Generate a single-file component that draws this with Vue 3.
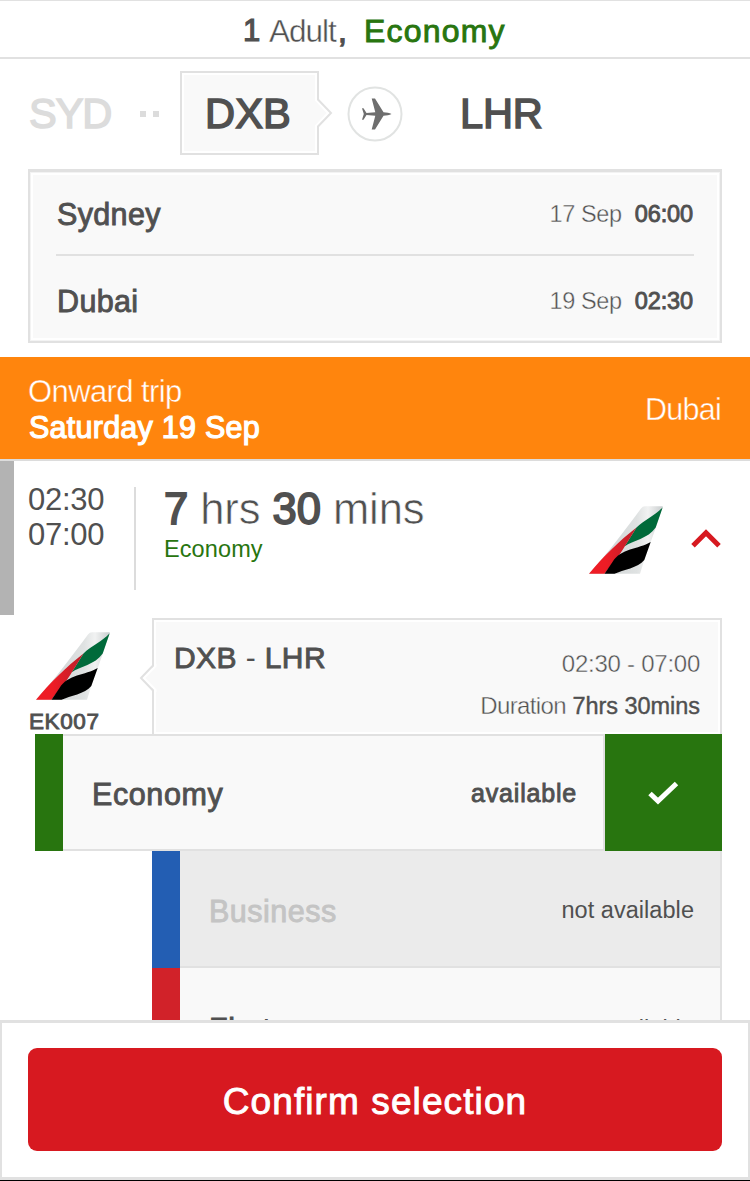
<script setup>
const stops = [
  { city: 'Sydney', date: '17 Sep', time: '06:00' },
  { city: 'Dubai', date: '19 Sep', time: '02:30' },
]
</script>

<template>
  <div class="screen">
    <svg class="defs" width="0" height="0" aria-hidden="true">
      <defs>
        <linearGradient id="fin" x1="0" y1="0" x2="1" y2="0">
          <stop offset="0.3" stop-color="#d3d7d8" />
          <stop offset="0.65" stop-color="#dfe2e2" />
          <stop offset="0.8" stop-color="#f1f2f2" />
          <stop offset="1" stop-color="#c9cdce" />
        </linearGradient>
        <linearGradient id="finRed" x1="0" y1="0" x2="1" y2="0">
          <stop offset="0.35" stop-color="#ee1c25" />
          <stop offset="1" stop-color="#b8202a" />
        </linearGradient>
        <symbol id="tail" viewBox="0 0 74 68">
          <path fill="url(#fin)" d="M0 67.7C20 46 39 20 52 2.5Q53.700 .3 56 .2H73.800L66.700 22L61.700 36L55.300 54L51 67.700Z" />
          <path fill="#006a3a" d="M73.700 1.300C66 9.500 56 13.500 47.500 21.500L35.500 40.500C44 34 59 33 66.700 21.500Z" />
          <path fill="url(#finRed)" d="M47.500 21.500C30 35 14 51 0 67.700H15.500C24 56 31 49 36 40Z" />
          <path d="M61.700 36C49 43.500 32 42 23.500 56L15.500 67.700H25.500C34 64 49 62 55.300 54Z" />
        </symbol>
      </defs>
    </svg>

    <main class="content">
      <header class="summary">
        <b class="count">1</b><span class="adult light">Adult</span><b class="comma">,</b>
        <b class="cabin">Economy</b>
      </header>

      <nav class="route">
        <b class="code from">SYD</b>
        <span class="dots"><i></i><i></i></span>
        <div class="current">
          <b class="code dxb">DXB</b>
          <svg class="arrow" width="19" height="32" viewBox="0 0 19 32">
            <path d="M0 3H4L15 16L4 29H0Z" fill="#f9f9f9" />
            <path d="M2 1V3L14 16L2 29V31" fill="none" stroke="#fff" stroke-width="2" />
            <path d="M4 0V2.500L17 16L4 29.500V32" fill="none" stroke="#e1e1e1" stroke-width="2" />
          </svg>
        </div>
        <svg class="plane" width="56" height="56" viewBox="0 0 56 56">
          <circle cx="28" cy="28" r="26.500" fill="#fff" stroke="#e1e3e2" stroke-width="2" />
          <path fill="#6e6e6e" d="M44.500 28C42.500 26.800 39.500 26.400 36.500 26.300L28 12.500H24.700L28.300 26.200L19.500 27L16.500 22.300H15L16.800 28L15 33.700H16.500L19.500 29L28.300 29.800L24.700 43.500H28L36.500 29.700C39.500 29.600 42.500 29.200 44.500 28Z" />
        </svg>
        <b class="code to">LHR</b>
      </nav>

      <section class="stops">
        <div v-for="s in stops" :key="s.city" class="stop">
          <b :class="['city', s.city.toLowerCase()]">{{ s.city }}</b>
          <span class="date light">{{ s.date }}</span>
          <b class="time">{{ s.time }}</b>
        </div>
      </section>

      <section class="banner">
        <div>
          <div class="onward light">Onward trip</div>
          <b class="day">Saturday 19 Sep</b>
        </div>
        <span class="where light">Dubai</span>
      </section>

      <section class="trip">
        <div class="marker"></div>
        <div class="hours"><span>02:30</span><span>07:00</span></div>
        <div class="length">
          <div class="total"><b>7</b> <span class="light">hrs</span> <b>30</b> <span class="light">mins</span></div>
          <div class="class">Economy</div>
        </div>
        <svg class="tail" width="74" height="68"><use href="#tail" /></svg>
        <svg class="chevron" width="30" height="20" viewBox="0 0 30 20">
          <path d="M2 16.800L15 3.700L28 16.800" fill="none" stroke="#d71920" stroke-width="5" />
        </svg>
      </section>

      <section class="leg">
        <div class="flight">
          <svg class="tail" width="74" height="68"><use href="#tail" /></svg>
          <b class="number">EK007</b>
        </div>
        <div class="detail">
          <svg class="notch" width="19" height="30" viewBox="0 0 19 30">
            <path d="M19 3H15L4 15L15 27H19Z" fill="#f9f9f9" />
            <path d="M16.500 1V3L5 15L16.500 27V29" fill="none" stroke="#fff" stroke-width="2" />
            <path d="M14 0V2.500L2 15L14 27.500V30" fill="none" stroke="#e1e1e1" stroke-width="2" />
          </svg>
          <b class="pair">DXB <span class="dash">-</span> LHR</b>
          <div class="timing">
            <div class="span light">02:30 - 07:00</div>
            <div class="duration"><span class="light">Duration</span> <b>7hrs 30mins</b></div>
          </div>
        </div>
      </section>

      <section class="cabins">
        <div class="row economy">
          <div class="swatch"></div>
          <div class="body">
            <b class="name">Economy</b><b class="state strong">available</b>
          </div>
          <div class="check">
            <svg width="32" height="26" viewBox="0 0 32 26">
              <path d="M3 13.500L11 21L29.500 3.500" fill="none" stroke="#fff" stroke-width="5" />
            </svg>
          </div>
        </div>
        <div class="row business">
          <div class="swatch"></div>
          <div class="body"><b class="name">Business</b><span class="state">not available</span></div>
        </div>
        <div class="row first">
          <div class="swatch"></div>
          <div class="body"><b class="name">First</b><span class="state">available</span></div>
        </div>
      </section>
    </main>

    <footer class="footer">
      <button class="confirm">Confirm selection</button>
    </footer>
  </div>
</template>

<style>
body {
  margin: 0;
  background: #fff;
}
</style>

<style scoped>
.screen {
  --ink: #505050;
  --line: #e1e1e1;
  --paper: #fff;
  width: 750px;
  height: 1181px;
  box-sizing: border-box;
  border-bottom: 1px solid #000;
  overflow: hidden;
  display: flex;
  flex-direction: column;
  background: #fff;
  color: var(--ink);
  font-family: "Liberation Sans", Arial, Helvetica, sans-serif;
  white-space: nowrap;
}
.screen * { box-sizing: border-box; }
.defs { position: absolute; }
svg { display: block; flex: none; }
/* Medium weight: regular glyphs with a slight outline */
b {
  font-weight: 400;
  -webkit-text-stroke: 0.9px currentColor;
}
/* Light weight: regular glyphs trimmed by the surface colour */
.light { -webkit-text-stroke: 0.4px var(--paper); }

.content {
  height: 1020px;
  flex: none;
  overflow: hidden;
}

.summary {
  height: 59px;
  padding: 3px 0 0 243px;
  border-top: 1px solid var(--line);
  border-bottom: 2px solid var(--line);
  display: flex;
  line-height: 54px;
  font-size: 32px;
}
.count { width: 26px; font-size: 31px; -webkit-text-stroke-width: 1.2px; }
.adult { width: 69px; font-size: 31.5px; letter-spacing: -1px; }
.comma { width: 26px; -webkit-text-stroke-width: 1.3px; }
.cabin { color: #28750f; letter-spacing: 1.2px; }

.route {
  height: 110px;
  padding: 0 0 2px 28px;
  display: flex;
  align-items: center;
}
.code {
  font-size: 41.6px;
  line-height: 82px;
  padding-top: 2px;
  -webkit-text-stroke-width: 1.5px;
}
.from { width: 112px; color: #dcdcdc; letter-spacing: -1.1px; padding-left: 1px; }
.dots { width: 40px; display: flex; gap: 7px; padding-top: 2px; }
.dots i { width: 6px; height: 6px; background: #dcdcdc; }
.current {
  position: relative;
  width: 139px;
  height: 84px;
  margin-right: 28px;
  border: 2px solid var(--line);
  box-shadow: inset 0 0 0 2px #fff;
  background: #f9f9f9;
  display: flex;
  align-items: center;
  padding-left: 23px;
}
.dxb { letter-spacing: 0.1px; }
.arrow { position: absolute; right: -16px; top: 24px; }
.plane { margin: 1px 55px 0 0; }
.to { letter-spacing: -0.2px; padding-left: 2px; }

.stops {
  --paper: #f9f9f9;
  width: 694px;
  height: 174px;
  margin: 0 28px 14px;
  border: 2px solid var(--line);
  border-top-width: 3px;
  box-shadow: inset 0 0 0 1px #f3f3f3, inset 0 0 0 3px #fff;
  background: #f9f9f9;
  padding: 0 26px;
}
.stop { height: 82px; display: flex; align-items: center; }
.stop + .stop { height: 87px; border-top: 2px solid var(--line); padding-top: 2px; }
.city { font-size: 30.5px; line-height: 40px; padding: 2px 0 0 1px; margin-right: auto; }
.sydney { letter-spacing: 0.35px; }
.dubai { letter-spacing: 0.35px; }
.date { font-size: 23.5px; letter-spacing: -0.4px; line-height: 40px; padding-top: 2px; margin-right: 13px; }
.time { font-size: 23.5px; letter-spacing: -0.1px; line-height: 40px; padding: 2px 1px 0 0; }

.banner {
  --paper: #ff850d;
  height: 104px;
  padding: 15px 29px 0 28px;
  background: #ff850d;
  border-bottom: 2px solid #dcdcdc;
  color: #fff;
  display: flex;
  justify-content: space-between;
}
.onward { font-size: 31px; line-height: 36px; letter-spacing: -0.6px; padding-top: 2px; height: 37px; }
.day { display: block; font-size: 30.5px; line-height: 36px; letter-spacing: 0.25px; -webkit-text-stroke-width: 1.2px; padding-left: 1px; }
.where { font-size: 30.5px; line-height: 74px; letter-spacing: -0.75px; }

.trip { height: 157px; display: flex; }
.marker { width: 14px; height: 154px; background: #b3b3b3; }
.hours {
  width: 122px;
  height: 103px;
  margin-top: 26px;
  padding: 0 0 0 14px;
  border-right: 2px solid #dcdcdc;
  display: flex;
  flex-direction: column;
  font-size: 31px;
  line-height: 35px;
  letter-spacing: -0.3px;
  margin-right: 28px;
}
.hours span { margin-top: -5px; padding-bottom: 5px; }
.length { width: 425px; padding-top: 20px; }
.total { font-size: 43.5px; line-height: 56px; letter-spacing: -0.05px; }
.total b { -webkit-text-stroke-width: 1.8px; }
.total .light { -webkit-text-stroke-width: 0.6px; }
.class { color: #28750f; font-size: 23.5px; line-height: 24px; letter-spacing: 0.1px; }
.trip .tail { margin-top: 45px; }
.chevron { margin: 67.5px 0 0 28px; }

.leg { --paper: #f9f9f9; height: 116px; display: flex; }
.flight { width: 124px; height: 116px; margin-left: 28px; padding-top: 14px; }
.flight .tail { margin-left: 8px; }
.number { display: block; font-size: 22.5px; line-height: 26px; letter-spacing: 0.6px; padding: 9px 0 0 1px; }
.detail {
  position: relative;
  width: 570px;
  height: 116px;
  border: 2px solid var(--line);
  border-bottom: 0;
  box-shadow: inset 0 0 0 2px #fff;
  background: #f9f9f9;
  padding: 20px 20px 0 20px;
  display: flex;
  justify-content: space-between;
}
.notch { position: absolute; left: -15px; top: 43px; }
.pair { font-size: 30px; line-height: 36px; letter-spacing: 0.4px; }
.dash { -webkit-text-stroke-width: 0; }
.timing { text-align: right; font-size: 24px; line-height: 42px; padding-top: 3px; }
.span { letter-spacing: -0.25px; }
.duration .light { letter-spacing: -0.65px; }
.duration b { font-size: 23.5px; letter-spacing: -0.05px; -webkit-text-stroke-width: 0.4px; }

.row { height: 117px; display: flex; margin: 0 28px 0 152px; }
.economy { margin-left: 35px; }
.swatch { width: 28px; background: #28750f; }
.business .swatch { background: #235eb3; }
.first .swatch { background: #d12229; }
.body {
  flex: 1;
  background: #f9f9f9;
  border-right: 2px solid var(--line);
  border-bottom: 2px solid var(--line);
  padding: 2px 26px 0 29px;
  display: flex;
  align-items: center;
  justify-content: space-between;
}
.economy .body { border-top: 2px solid var(--line); }
.business .body { background: #ebebeb; padding-top: 4px; }
.first .body { padding-top: 6px; }
.name { font-size: 30.5px; line-height: 40px; letter-spacing: 0.6px; }
.business .name { color: #c4c4c4; letter-spacing: 0.5px; }
.state { font-size: 23.5px; letter-spacing: 0.05px; line-height: 40px; margin-top: -2px; }
.first .state { margin-top: 0; }
.strong { font-size: 25px; letter-spacing: 0.8px; }
.check { width: 117px; background: #28750f; }
.check svg { margin: 46px 0 0 42px; }

.footer {
  height: 160px;
  flex: none;
  border: 2px solid var(--line);
  border-top-width: 3px;
  border-bottom-width: 3px;
  background: #fff;
  padding: 25px 26px 0;
}
.confirm {
  display: block;
  width: 694px;
  height: 103px;
  border: 0;
  border-radius: 9px;
  background: #d71920;
  color: #fff;
  font: 400 37px/98px "Liberation Sans", Arial, sans-serif;
  letter-spacing: 1.1px;
  -webkit-text-stroke: 0.9px #fff;
  padding: 5px 0 0;
}
</style>
